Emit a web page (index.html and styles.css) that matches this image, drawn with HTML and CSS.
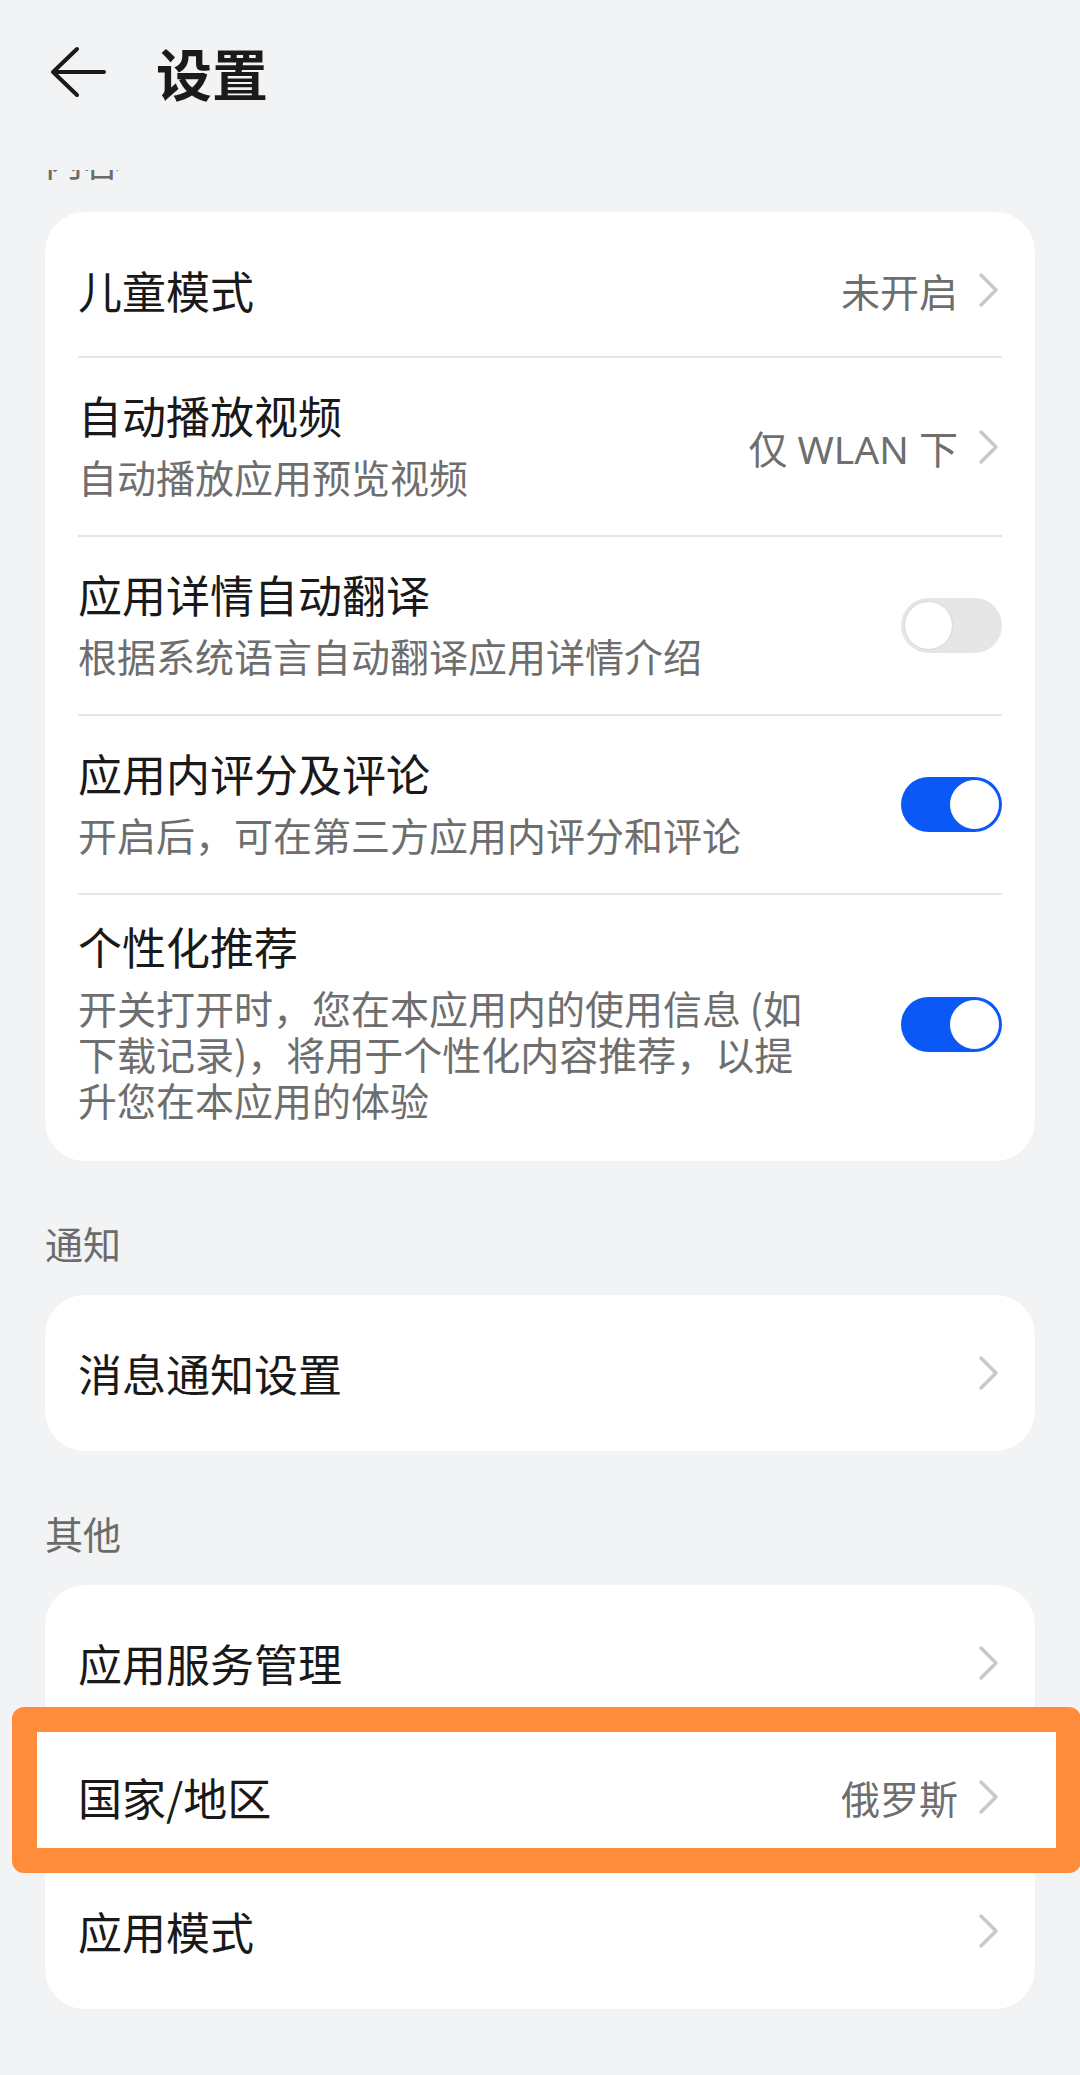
FILE: index.html
```html
<!DOCTYPE html>
<html lang="zh-CN">
<head>
  <meta charset="UTF-8" />
  <title>设置</title>
  <link rel="stylesheet" href="styles.css">
</head>
<body>
  <header class="top-bar">
    <span class="back">
      <svg width="56" height="52" viewBox="0 0 56 52"><path d="M3 26 H54 M27 3 L3 26 L27 49" fill="none" stroke="#1a1a1a" stroke-width="4" stroke-linecap="round" stroke-linejoin="round"/></svg>
    </span>
    <h1>设置</h1>
  </header>

  <main class="content">
    <h2 class="group-title first">内容</h2>
    <section class="card">
      <div class="row">
        <div class="text"><div class="title">儿童模式</div></div>
        <span class="value">未开启</span>
        <svg class="chevron" width="24" height="36" viewBox="0 0 24 36"><path d="M3 3 L18 18 L3 33" fill="none" stroke="#c9c9c9" stroke-width="3.5" stroke-linecap="round" stroke-linejoin="round"/></svg>
      </div>
      <div class="row two">
        <div class="text">
          <div class="title">自动播放视频</div>
          <div class="sub">自动播放应用预览视频</div>
        </div>
        <span class="value">仅 WLAN 下</span>
        <svg class="chevron" width="24" height="36" viewBox="0 0 24 36"><path d="M3 3 L18 18 L3 33" fill="none" stroke="#c9c9c9" stroke-width="3.5" stroke-linecap="round" stroke-linejoin="round"/></svg>
      </div>
      <div class="row two">
        <div class="text">
          <div class="title">应用详情自动翻译</div>
          <div class="sub">根据系统语言自动翻译应用详情介绍</div>
        </div>
        <span class="switch"><span class="knob"></span></span>
      </div>
      <div class="row two">
        <div class="text">
          <div class="title">应用内评分及评论</div>
          <div class="sub">开启后，可在第三方应用内评分和评论</div>
        </div>
        <span class="switch on"><span class="knob"></span></span>
      </div>
      <div class="row two long">
        <div class="text">
          <div class="title">个性化推荐</div>
          <div class="sub">开关打开时，您在本应用内的使用信息 (如下载记录)，将用于个性化内容推荐，以提升您在本应用的体验</div>
        </div>
        <span class="switch on"><span class="knob"></span></span>
      </div>
    </section>

    <h2 class="group-title">通知</h2>
    <section class="card">
      <div class="row">
        <div class="text"><div class="title">消息通知设置</div></div>
        <svg class="chevron" width="24" height="36" viewBox="0 0 24 36"><path d="M3 3 L18 18 L3 33" fill="none" stroke="#c9c9c9" stroke-width="3.5" stroke-linecap="round" stroke-linejoin="round"/></svg>
      </div>
    </section>

    <h2 class="group-title">其他</h2>
    <section class="card">
      <div class="row">
        <div class="text"><div class="title">应用服务管理</div></div>
        <svg class="chevron" width="24" height="36" viewBox="0 0 24 36"><path d="M3 3 L18 18 L3 33" fill="none" stroke="#c9c9c9" stroke-width="3.5" stroke-linecap="round" stroke-linejoin="round"/></svg>
      </div>
      <div class="row marked">
        <div class="text"><div class="title">国家/地区</div></div>
        <span class="value">俄罗斯</span>
        <svg class="chevron" width="24" height="36" viewBox="0 0 24 36"><path d="M3 3 L18 18 L3 33" fill="none" stroke="#c9c9c9" stroke-width="3.5" stroke-linecap="round" stroke-linejoin="round"/></svg>
      </div>
      <div class="row">
        <div class="text"><div class="title">应用模式</div></div>
        <svg class="chevron" width="24" height="36" viewBox="0 0 24 36"><path d="M3 3 L18 18 L3 33" fill="none" stroke="#c9c9c9" stroke-width="3.5" stroke-linecap="round" stroke-linejoin="round"/></svg>
      </div>
    </section>
  </main>
</body>
</html>
```

FILE: styles.css
```css
* {
  box-sizing: border-box;
}

body {
  font-family: "Noto Sans CJK SC", "Noto Sans", sans-serif;
  background-color: #f1f3f5;
  color: #191919;
  margin: 0;
  padding: 0;
}

.top-bar {
  height: 170px;
  display: flex;
  align-items: flex-start;
  padding: 46px 0 0 50px;
}

.back {
  display: flex;
  margin-right: 50px;
}

.top-bar h1 {
  margin: 0;
  font-size: 56px;
  font-weight: 700;
  line-height: 52px;
  color: #1a1a1a;
}

.content {
  height: 1905px;
  overflow: hidden;
  padding: 0 45px;
}

.group-title {
  margin: 0;
  padding: 56px 0 26px 0;
  font-size: 38px;
  font-weight: 400;
  line-height: 52px;
  color: #6b6b6b;
}

.group-title.first {
  margin-top: -92px;
}

.card {
  background-color: #fff;
  border-radius: 40px;
  padding: 12px 33px;
}

.row {
  display: flex;
  align-items: center;
  min-height: 132px;
  padding: 23px 0;
}

.row + .row {
  border-top: 2px solid #e6e6e6;
  min-height: 134px;
}

.row.two {
  min-height: 179px;
}

.row.two .text {
  padding-bottom: 10px;
}

.row.long {
  padding: 21px 0 17px 0;
}

.text {
  flex: 1;
}

.title {
  font-size: 44px;
  line-height: 60px;
}

.sub {
  max-width: 745px;
  margin-top: 8px;
  font-size: 39px;
  line-height: 46px;
  color: #6e6e6e;
}

.value {
  font-family: "Noto Sans", "Noto Sans CJK SC", sans-serif;
  font-size: 39px;
  color: #6e6e6e;
  margin-right: 20px;
}

.chevron {
  flex-shrink: 0;
}

.switch {
  flex-shrink: 0;
  display: flex;
  width: 101px;
  height: 55px;
  padding: 3px;
  border-radius: 28px;
  background-color: #e6e6e6;
}

.switch.on {
  background-color: #0a59f7;
  justify-content: flex-end;
}

.knob {
  width: 49px;
  height: 49px;
  border-radius: 50%;
  background-color: #fff;
  border: 1px solid #d6d6d6;
}

.switch.on .knob {
  border-color: #fff;
}

.marked {
  position: relative;
  z-index: 0;
}

/* orange highlight box drawn over the row */
.marked::before {
  content: "";
  position: absolute;
  top: -24px;
  bottom: -10px;
  left: -66px;
  right: -79px;
  border: 25px solid #ff8c3a;
  border-radius: 12px;
  background-color: #fff;
  z-index: -1;
}
```
